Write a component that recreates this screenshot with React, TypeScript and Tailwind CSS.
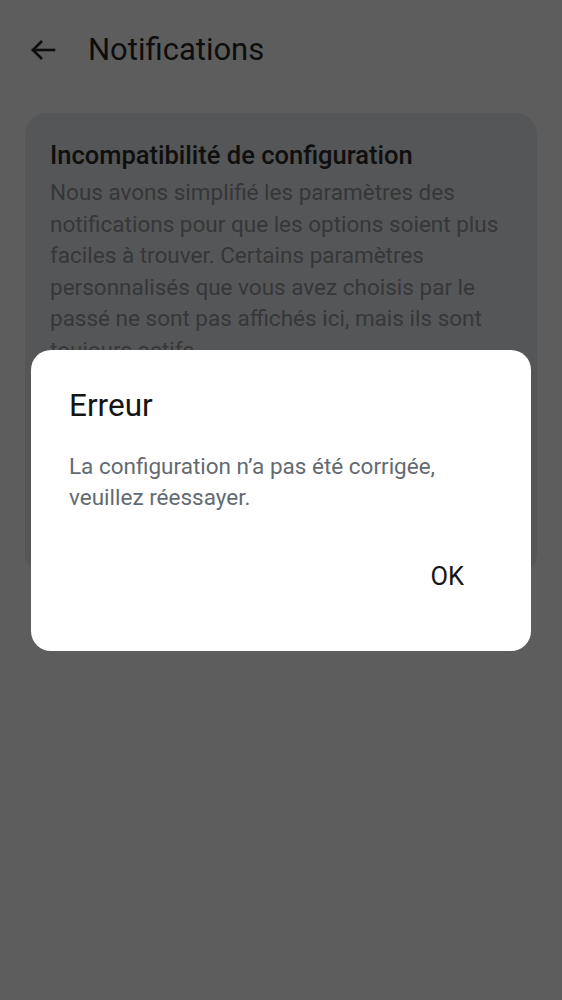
import React from "react";

export default function App() {
  return (
    <div className="relative w-[562px] h-[1000px] bg-[#5d5d5d] overflow-hidden" style={{ fontFamily: "Roboto, 'Noto Sans', sans-serif" }}>
      <div className="flex flex-col">
        <div className="h-[100px] flex items-center pl-[30px] gap-[32px]">
          <svg width="26" height="24" viewBox="0 0 26 24" fill="none" stroke="#0d0d0d" strokeWidth="2.6" strokeLinecap="square">
            <path d="M3 12H24" />
            <path d="M12 3L3 12L12 21" strokeLinecap="butt" strokeLinejoin="miter" />
          </svg>
          <span className="text-[31px] leading-[36px] text-[#0d0d0d]">Notifications</span>
        </div>
        <div className="mt-[13px] mx-[25px] h-[462px] rounded-[22px] bg-[#555657] pt-[27px] px-[25px] overflow-hidden">
          <div className="text-[25.5px] leading-[30px] font-medium text-[#0f0f0f]">Incompatibilité de configuration</div>
          <p className="mt-[7px] text-[22.5px] leading-[31.5px] text-[#353739]">
            Nous avons simplifié les paramètres des notifications pour que les options soient plus faciles à trouver. Certains paramètres personnalisés que vous avez choisis par le passé ne sont pas affichés ici, mais ils sont toujours actifs.
          </p>
        </div>
      </div>
      <div className="absolute inset-0 flex items-center justify-center">
        <div className="w-[500px] h-[301px] bg-white rounded-[20px] pt-[38px] pl-[38px] pr-[30px] flex flex-col">
          <div className="text-[31.5px] leading-[36px] text-[#151515]">Erreur</div>
          <p className="mt-[27.5px] text-[22.5px] leading-[31px] text-[#646a72]">
            La configuration n’a pas été corrigée,<br />veuillez réessayer.
          </p>
          <div className="mt-[47.5px] flex justify-end pr-[37px]">
            <span className="text-[25.5px] leading-[30px] text-[#151515]">OK</span>
          </div>
        </div>
      </div>
    </div>
  );
}
